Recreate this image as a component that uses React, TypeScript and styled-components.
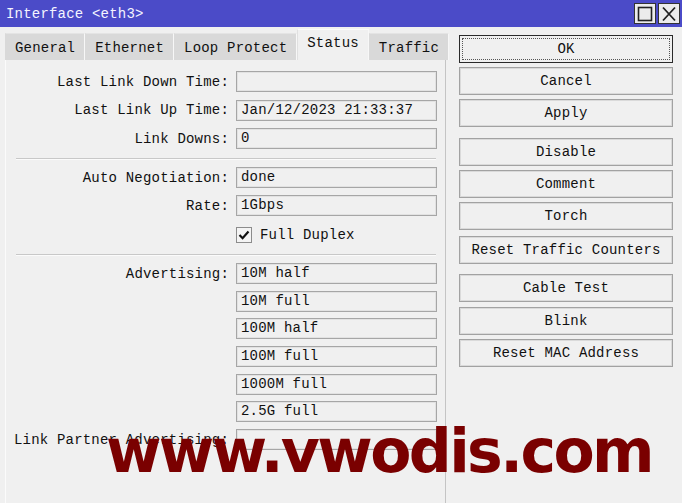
import React from 'react';
import styled, { createGlobalStyle } from 'styled-components';

const GlobalStyle = createGlobalStyle`
  html, body {
    margin: 0;
    padding: 0;
    background: #f0f0f0;
  }
`;

const Window = styled.div`
  position: relative;
  width: 682px;
  height: 503px;
  overflow: hidden;
  background: #f0f0f0;
  font-family: "Liberation Mono", "DejaVu Sans Mono", monospace;
  font-size: 14px;
  letter-spacing: 0.2px;
  color: #111;
`;

const TitleBar = styled.div`
  display: flex;
  align-items: center;
  height: 27px;
  padding: 0 2px 0 6px;
  background: #4b4bc8;
  color: #f4f4ff;
`;

const TitleText = styled.div`
  flex: 1;
`;

const WinButton = styled.div`
  display: flex;
  align-items: center;
  justify-content: center;
  width: 22px;
  height: 21px;
  margin-left: 2px;
  background: #ececec;
  border: 1px solid #333;
  box-sizing: border-box;
`;

const Body = styled.div`
  display: flex;
  padding-left: 5px;
  height: 476px;
`;

const LeftPane = styled.div`
  display: flex;
  flex-direction: column;
  width: 441px;
`;

const TabRow = styled.div`
  display: flex;
  align-items: flex-end;
  height: 33px;
`;

const Tab = styled.div<{ active?: boolean }>`
  display: flex;
  align-items: center;
  box-sizing: border-box;
  height: ${p => (p.active ? '31px' : '27px')};
  padding: ${p => (p.active ? '0 9px 4px' : '1px 9px 0')};
  background: ${p => (p.active ? '#f0f0f0' : '#d9d9d9')};
  border-top: 1px solid ${p => (p.active ? '#fafafa' : '#e4e4e4')};
  border-right: 1px solid #f7f7f7;
  border-left: 1px solid ${p => (p.active ? '#e0e0e0' : 'transparent')};
  white-space: nowrap;
`;

const Panel = styled.div`
  flex: 1;
  box-sizing: border-box;
  padding: 11px 9px 0 5px;
  background: #f0f0f0;
  border-left: 1px solid #fbfbfb;
  border-right: 1px solid #c4c4c4;
`;

// one block of label/value rows between separators
const FieldGrid = styled.div<{ gap: number }>`
  display: grid;
  grid-template-columns: 218px 201px;
  column-gap: 7px;
  row-gap: ${p => p.gap}px;
  align-items: center;
`;

const Label = styled.div`
  grid-column: 1;
  text-align: right;
  white-space: nowrap;
`;

const Field = styled.div`
  grid-column: 2;
  box-sizing: border-box;
  height: 21px;
  padding: 0 4px;
  line-height: 19px;
  background: #f0f0f0;
  border: 1px solid #a6a6a6;
  box-shadow: inset 0 0 0 1px #e2e2e2;
  white-space: nowrap;
`;

const Separator = styled.div<{ top: number; bottom: number }>`
  height: 1px;
  margin: ${p => p.top}px 0 ${p => p.bottom}px 5px;
  background: #c8c8c8;
  box-shadow: 0 1px 0 #fbfbfb;
`;

const CheckRow = styled.label`
  grid-column: 2;
  display: flex;
  align-items: center;
  gap: 8px;
  height: 22px;
  margin-top: 1px;
`;

const CheckBox = styled.span`
  display: flex;
  align-items: center;
  justify-content: center;
  width: 16px;
  height: 16px;
  box-sizing: border-box;
  background: #f4f4f4;
  border: 1px solid #8c8c8c;
`;

const ButtonColumn = styled.div`
  display: flex;
  flex-direction: column;
  gap: 4px;
  width: 214px;
  margin-left: 13px;
  padding-top: 8px;
`;

const Button = styled.div<{ primary?: boolean; extra?: number }>`
  position: relative;
  display: flex;
  align-items: center;
  justify-content: center;
  box-sizing: border-box;
  height: 28px;
  margin-top: ${p => p.extra ?? 0}px;
  background: #f0f0f0;
  border: 1px solid ${p => (p.primary ? '#2a2a2a' : '#a2a2a2')};
  box-shadow: inset 0 0 0 1px ${p => (p.primary ? '#f0f0f0' : '#dadada')};
  white-space: nowrap;

  ${p =>
    p.primary &&
    `
    &::after {
      content: '';
      position: absolute;
      inset: 2px;
      border: 1px dotted #555;
    }
  `}
`;

const Watermark = styled.div`
  position: absolute;
  left: 106px;
  top: 421px;
  font-family: "DejaVu Sans", "Liberation Sans", sans-serif;
  font-weight: bold;
  font-size: 60px;
  letter-spacing: -2.6px;
  line-height: 1;
  color: #7a0000;
  pointer-events: none;
`;

const advertising = ['10M half', '10M full', '100M half', '100M full', '1000M full', '2.5G full'];

const tabs = ['General', 'Ethernet', 'Loop Protect', 'Status', 'Traffic'];

const buttons: { text: string; primary?: boolean; extra?: number }[] = [
  { text: 'OK', primary: true },
  { text: 'Cancel' },
  { text: 'Apply' },
  { text: 'Disable', extra: 7 },
  { text: 'Comment' },
  { text: 'Torch' },
  { text: 'Reset Traffic Counters', extra: 2 },
  { text: 'Cable Test', extra: 6 },
  { text: 'Blink', extra: 1 },
  { text: 'Reset MAC Address' },
];

export default function App() {
  return (
    <Window>
      <GlobalStyle />
      <TitleBar>
        <TitleText>Interface &lt;eth3&gt;</TitleText>
        <WinButton>
          <svg width="16" height="16" viewBox="0 0 16 16">
            <rect x="1.5" y="1.5" width="13" height="13" fill="none" stroke="#222" strokeWidth="1.6" />
          </svg>
        </WinButton>
        <WinButton>
          <svg width="16" height="16" viewBox="0 0 16 16">
            <path d="M2 1.5 L14 14.5 M14 1.5 L2 14.5" stroke="#222" strokeWidth="1.8" />
          </svg>
        </WinButton>
      </TitleBar>
      <Body>
        <LeftPane>
          <TabRow>
            {tabs.map(t => (
              <Tab key={t} active={t === 'Status'}>
                {t}
              </Tab>
            ))}
          </TabRow>
          <Panel>
            <FieldGrid gap={7.5}>
              <Label>Last Link Down Time:</Label>
              <Field />
              <Label>Last Link Up Time:</Label>
              <Field>Jan/12/2023 21:33:37</Field>
              <Label>Link Downs:</Label>
              <Field>0</Field>
            </FieldGrid>

            <Separator top={9} bottom={8} />

            <FieldGrid gap={7}>
              <Label>Auto Negotiation:</Label>
              <Field>done</Field>
              <Label>Rate:</Label>
              <Field>1Gbps</Field>
              <CheckRow>
                <CheckBox>
                  <svg width="12" height="12" viewBox="0 0 12 12">
                    <path d="M1.5 6 L4.6 9.2 L10.5 2.6" fill="none" stroke="#111" strokeWidth="2.2" />
                  </svg>
                </CheckBox>
                Full Duplex
              </CheckRow>
            </FieldGrid>

            <Separator top={8} bottom={8} />

            <FieldGrid gap={6.7}>
              {advertising.map((a, i) => (
                <React.Fragment key={a}>
                  {i === 0 && <Label>Advertising:</Label>}
                  <Field>{a}</Field>
                </React.Fragment>
              ))}
              <Label>Link Partner Advertising:</Label>
              <Field />
            </FieldGrid>
          </Panel>
        </LeftPane>
        <ButtonColumn>
          {buttons.map(b => (
            <Button key={b.text} primary={b.primary} extra={b.extra}>
              {b.text}
            </Button>
          ))}
        </ButtonColumn>
      </Body>
      <Watermark>www.vwodis.com</Watermark>
    </Window>
  );
}
